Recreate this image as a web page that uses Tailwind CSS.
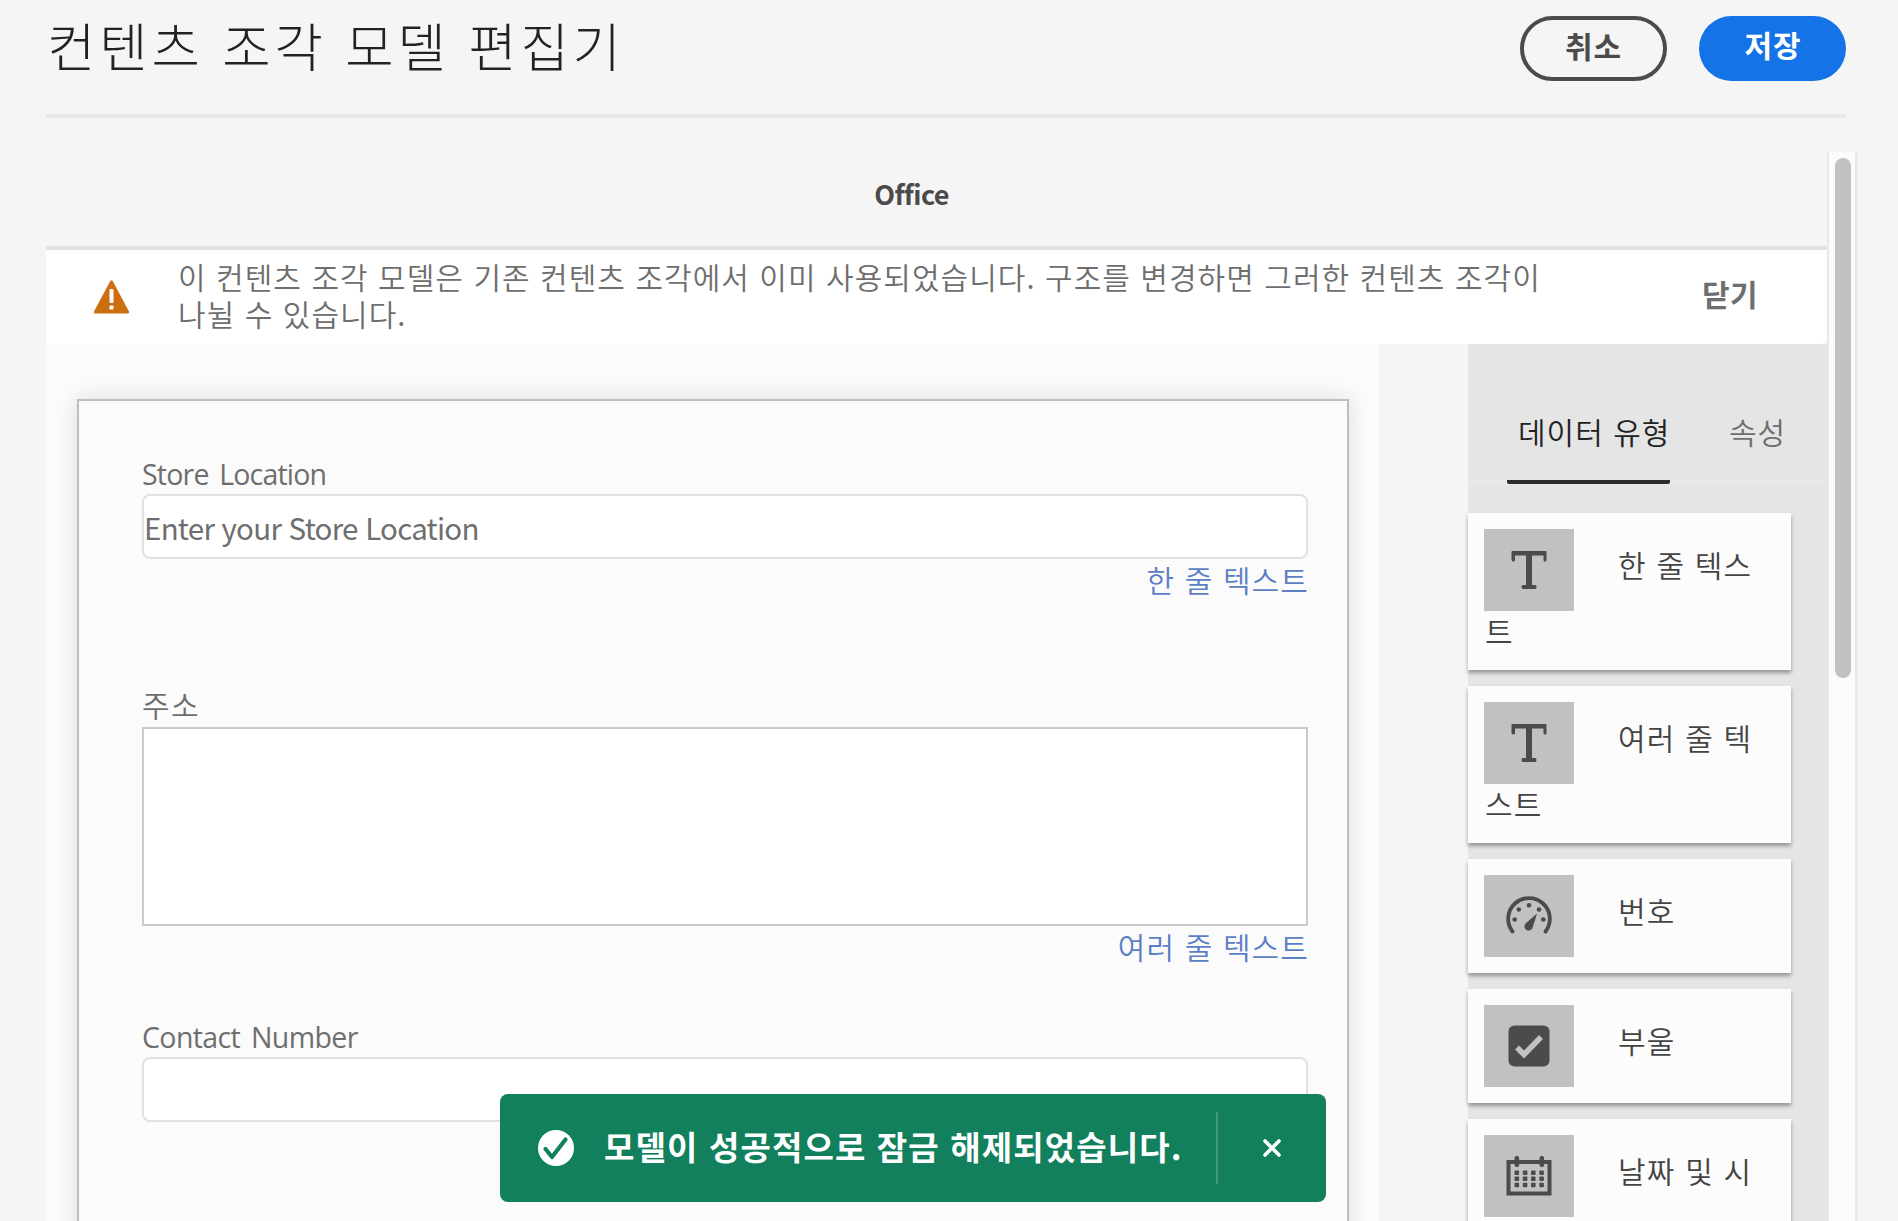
<!DOCTYPE html>
<html lang="ko">
<head>
<meta charset="utf-8">
<title>컨텐츠 조각 모델 편집기</title>
<script src="https://cdn.jsdelivr.net/npm/@tailwindcss/browser@4"></script>
</head>
<body class="relative h-[1221px] w-[1898px] overflow-hidden bg-[#f5f5f5] font-['Noto_Sans_CJK_KR',sans-serif] text-[30px] font-[350] leading-[37px] text-[#6e6e6e]">
<header class="mx-[46px] flex h-[118px] w-[1800px] items-start justify-between border-b-4 border-[#e8e8e8]">
  <h1 class="pl-[1px] pt-[9px] text-[52.500px] font-light leading-[70px] tracking-[3.900px] text-[#222] whitespace-nowrap">컨텐츠 조각 모델 편집기</h1>
  <div class="flex gap-[32px] pt-[16px] text-[30px] font-bold leading-[50px] tracking-[1px]">
    <button class="flex h-[65px] w-[147px] items-start justify-center rounded-full border-4 border-[#4b4b4b] text-[#4b4b4b]">취소</button>
    <button class="flex h-[65px] w-[147px] items-start justify-center rounded-full bg-[#1473e6] pt-[3px] pl-px text-white">저장</button>
  </div>
</header>

<main class="ml-[46px] flex h-[1069px] mt-[34px]">
  <div class="w-[1781px]">
    <div class="flex h-[98px] items-center border-b-4 border-[#e1e1e1]">
      <h2 class="w-[1731px] pb-[11px] text-center text-[27px] font-bold tracking-[-0.600px] text-[#4b4b4b]">Office</h2>
    </div>
    <section class="flex h-[94px] rounded-br-md bg-white">
      <svg class="ml-[47px] mt-[30px] h-[34px] w-[37px]" viewBox="0 0 37 34"><path fill="#cb6f10" d="M17.3 1q1.2-1.6 2.4 0L36 31.500q.6 1.800-1 2H2q-1.600-.2-1-2z"/><rect x="16.500" y="9" width="4" height="14" rx="1" fill="#fff"/><rect x="16.500" y="25.500" width="4" height="4" rx="1" fill="#fff"/></svg>
      <p class="ml-[48px] w-[1400px] pt-[8px] tracking-[1.030px] whitespace-nowrap">이 컨텐츠 조각 모델은 기존 컨텐츠 조각에서 이미 사용되었습니다. 구조를 변경하면 그러한 컨텐츠 조각이<br>나뉠 수 있습니다.</p>
      <button class="ml-[124px] pb-[7px] font-bold tracking-[0.500px] whitespace-nowrap">닫기</button>
    </section>
    <div class="flex h-[877px]">
      <section class="w-[1333px] bg-[#fbfbfb] pl-[31px] pt-[55px]">
        <form class="h-[860px] w-[1272px] border-2 border-[#bebebe] bg-[#fbfbfb] pl-[63px] shadow-[0_0_22px_rgba(0,0,0,0.13)]">
          <label class="mt-[55px] block h-[38px] font-['Open_Sans','Noto_Sans_CJK_KR',sans-serif] text-[28.500px] font-normal tracking-[-0.800px] [word-spacing:4px]">Store Location</label>
          <div class="flex h-[65px] w-[1166px] items-center rounded-lg border-2 border-[#e1e1e1] bg-white pt-[2px] text-[29.500px] font-normal tracking-[-0.750px]">Enter your Store Location</div>
          <p class="h-[37px] w-[1167px] pt-[2px] text-right tracking-[1.100px] text-[#5c7fc4]">한 줄 텍스트</p>
          <label class="mt-[90px] block h-[41px] text-[30px] tracking-[1.300px]">주소</label>
          <div class="h-[199px] w-[1166px] border-2 border-[#cacaca] bg-white"></div>
          <p class="h-[37px] w-[1167px] pt-[2px] text-right tracking-[1.100px] text-[#5c7fc4]">여러 줄 텍스트</p>
          <label class="mt-[56px] block h-[38px] font-['Open_Sans','Noto_Sans_CJK_KR',sans-serif] text-[28.500px] font-normal tracking-[-0.600px] [word-spacing:4px]">Contact Number</label>
          <div class="h-[65px] w-[1166px] rounded-lg border-2 border-[#e1e1e1] bg-white"></div>
        </form>
      </section>
      <aside class="ml-[89px] w-[359px] bg-[#e5e5e5]">
        <nav class="flex h-[140px] border-b-4 border-[#e8e8e8] pl-[39px] tracking-[1px]">
          <a class="-mb-1 h-[140px] w-[163px] rounded-b-xs border-b-4 border-[#2c2c2c] pl-[11px] pt-[69px] text-[#222] whitespace-nowrap">데이터 유형</a>
          <a class="ml-[59px] pt-[69px] whitespace-nowrap">속성</a>
        </nav>
        <ul class="mt-[29px] w-[323px] space-y-[16px] tracking-[1.200px] text-[#444]">
          <li class="h-[157px] bg-[#fcfcfc] p-[16px] shadow-[0_3px_4px_rgba(0,0,0,0.35)]">
            <div class="flex h-[82px]"><span class="flex w-[90px] items-center justify-center bg-[#c1c1c1]">
              <svg class="h-[38px] w-[36px]" viewBox="0 0 36 38"><path fill="#4b4b4b" d="M1.500 0h33q1 0 1 1v8q0 1.500-1.500 1.500t-1.500-1.500V4.500h-11.500V34h3q1.500 0 1.500 2t-1.500 2h-12q-1.500 0-1.500-2t1.500-2h3V4.500H4V9q0 1.500-1.500 1.500T.5 9V1q0-1 1-1z"/></svg></span>
              <span class="ml-[44px] pt-[17px] whitespace-nowrap">한 줄 텍스</span></div>
            <p class="pl-px pt-px">트</p>
          </li>
          <li class="h-[157px] bg-[#fcfcfc] p-[16px] shadow-[0_3px_4px_rgba(0,0,0,0.35)]">
            <div class="flex h-[82px]"><span class="flex w-[90px] items-center justify-center bg-[#c1c1c1]">
              <svg class="h-[38px] w-[36px]" viewBox="0 0 36 38"><path fill="#4b4b4b" d="M1.500 0h33q1 0 1 1v8q0 1.500-1.500 1.500t-1.500-1.500V4.500h-11.500V34h3q1.500 0 1.500 2t-1.500 2h-12q-1.500 0-1.500-2t1.500-2h3V4.500H4V9q0 1.500-1.500 1.500T.5 9V1q0-1 1-1z"/></svg></span>
              <span class="ml-[44px] pt-[17px] whitespace-nowrap">여러 줄 텍</span></div>
            <p class="pl-px pt-px">스트</p>
          </li>
          <li class="h-[114px] bg-[#fcfcfc] p-[16px] shadow-[0_3px_4px_rgba(0,0,0,0.35)]">
            <div class="flex h-[82px]"><span class="flex w-[90px] items-center justify-center bg-[#c1c1c1]">
              <svg class="h-[40px] w-[46px]" viewBox="0 0 46 40"><path d="M6.500 35.500A20.800 20.800 0 1 1 39.500 35.500" fill="none" stroke="#4b4b4b" stroke-width="3.800" stroke-linecap="round"/><g fill="#4b4b4b"><circle cx="8.700" cy="23.500" r="2.300"/><circle cx="12.800" cy="13.500" r="2.300"/><circle cx="23" cy="9.300" r="2.300"/><circle cx="33" cy="13.500" r="2.300"/><circle cx="37.300" cy="23.500" r="2.300"/><path d="M31 17.500L19.600 27.500A4.200 4.200 0 1 0 26.800 31z"/></g></svg></span>
              <span class="ml-[44px] pt-[17px] whitespace-nowrap">번호</span></div>
          </li>
          <li class="h-[114px] bg-[#fcfcfc] p-[16px] shadow-[0_3px_4px_rgba(0,0,0,0.35)]">
            <div class="flex h-[82px]"><span class="flex w-[90px] items-center justify-center bg-[#c1c1c1]">
              <svg class="h-[42px] w-[42px]" viewBox="0 0 42 42"><rect x=".5" y=".5" width="41" height="41" rx="6" fill="#4b4b4b"/><path d="M9 22.500L16 29.500L33 12" fill="none" stroke="#c1c1c1" stroke-width="5.500"/></svg></span>
              <span class="ml-[44px] pt-[17px] whitespace-nowrap">부울</span></div>
          </li>
          <li class="h-[157px] bg-[#fcfcfc] p-[16px] shadow-[0_3px_4px_rgba(0,0,0,0.35)]">
            <div class="flex h-[82px]"><span class="flex w-[90px] items-center justify-center bg-[#c1c1c1]">
              <svg class="h-[42px] w-[46px]" viewBox="0 0 46 42"><rect x="2.500" y="7" width="41" height="31.500" fill="none" stroke="#4b4b4b" stroke-width="4"/><g fill="#4b4b4b"><rect x="8.500" y="1" width="4.600" height="11" rx="2"/><rect x="33.500" y="1" width="4.600" height="11" rx="2"/><rect x="8.500" y="15.500" width="4.600" height="4.600" rx="1"/><rect x="16.800" y="15.500" width="4.600" height="4.600" rx="1"/><rect x="25" y="15.500" width="4.600" height="4.600" rx="1"/><rect x="33.300" y="15.500" width="4.600" height="4.600" rx="1"/><rect x="8.500" y="21.500" width="4.600" height="4.600" rx="1"/><rect x="16.800" y="21.500" width="4.600" height="4.600" rx="1"/><rect x="25" y="21.500" width="4.600" height="4.600" rx="1"/><rect x="33.300" y="21.500" width="4.600" height="4.600" rx="1"/><rect x="8.500" y="27.700" width="4.600" height="4.600" rx="1"/><rect x="16.800" y="27.700" width="4.600" height="4.600" rx="1"/><rect x="25" y="27.700" width="4.600" height="4.600" rx="1"/><rect x="33.300" y="27.700" width="4.600" height="4.600" rx="1"/></g></svg></span>
              <span class="ml-[44px] pt-[17px] whitespace-nowrap">날짜 및 시</span></div>
          </li>
        </ul>
      </aside>
    </div>
  </div>
  <div class="w-[30px] border-x-2 border-[#e8e8e8] bg-[#fbfbfb] pl-[6px] pt-[6px]">
    <div class="h-[520px] w-[16px] rounded-full bg-[#c2c2c2]"></div>
  </div>
</main>

<div class="absolute left-[500px] top-[1094px] flex h-[108px] w-[826px] items-center rounded-lg bg-[#12805c] text-white">
  <svg class="ml-[38px] h-[36px] w-[36px]" viewBox="0 0 36 36"><circle cx="18" cy="18" r="18" fill="#fff"/><path d="M7.500 19L14 27L27.500 9.500" fill="none" stroke="#12805c" stroke-width="4.200" stroke-linecap="round" stroke-linejoin="round"/></svg>
  <p class="ml-[30px] w-[612px] pb-[4px] text-[33px] font-bold leading-[44px] tracking-[1.150px] whitespace-nowrap">모델이 성공적으로 잠금 해제되었습니다.</p>
  <span class="h-[72px] w-[2px] bg-white/20"></span>
  <svg class="ml-[45px] h-[18px] w-[18px]" viewBox="0 0 18 18"><path d="M2 2L16 16M16 2L2 16" stroke="#fff" stroke-width="3.600" stroke-linecap="round"/></svg>
</div>
</body>
</html>
